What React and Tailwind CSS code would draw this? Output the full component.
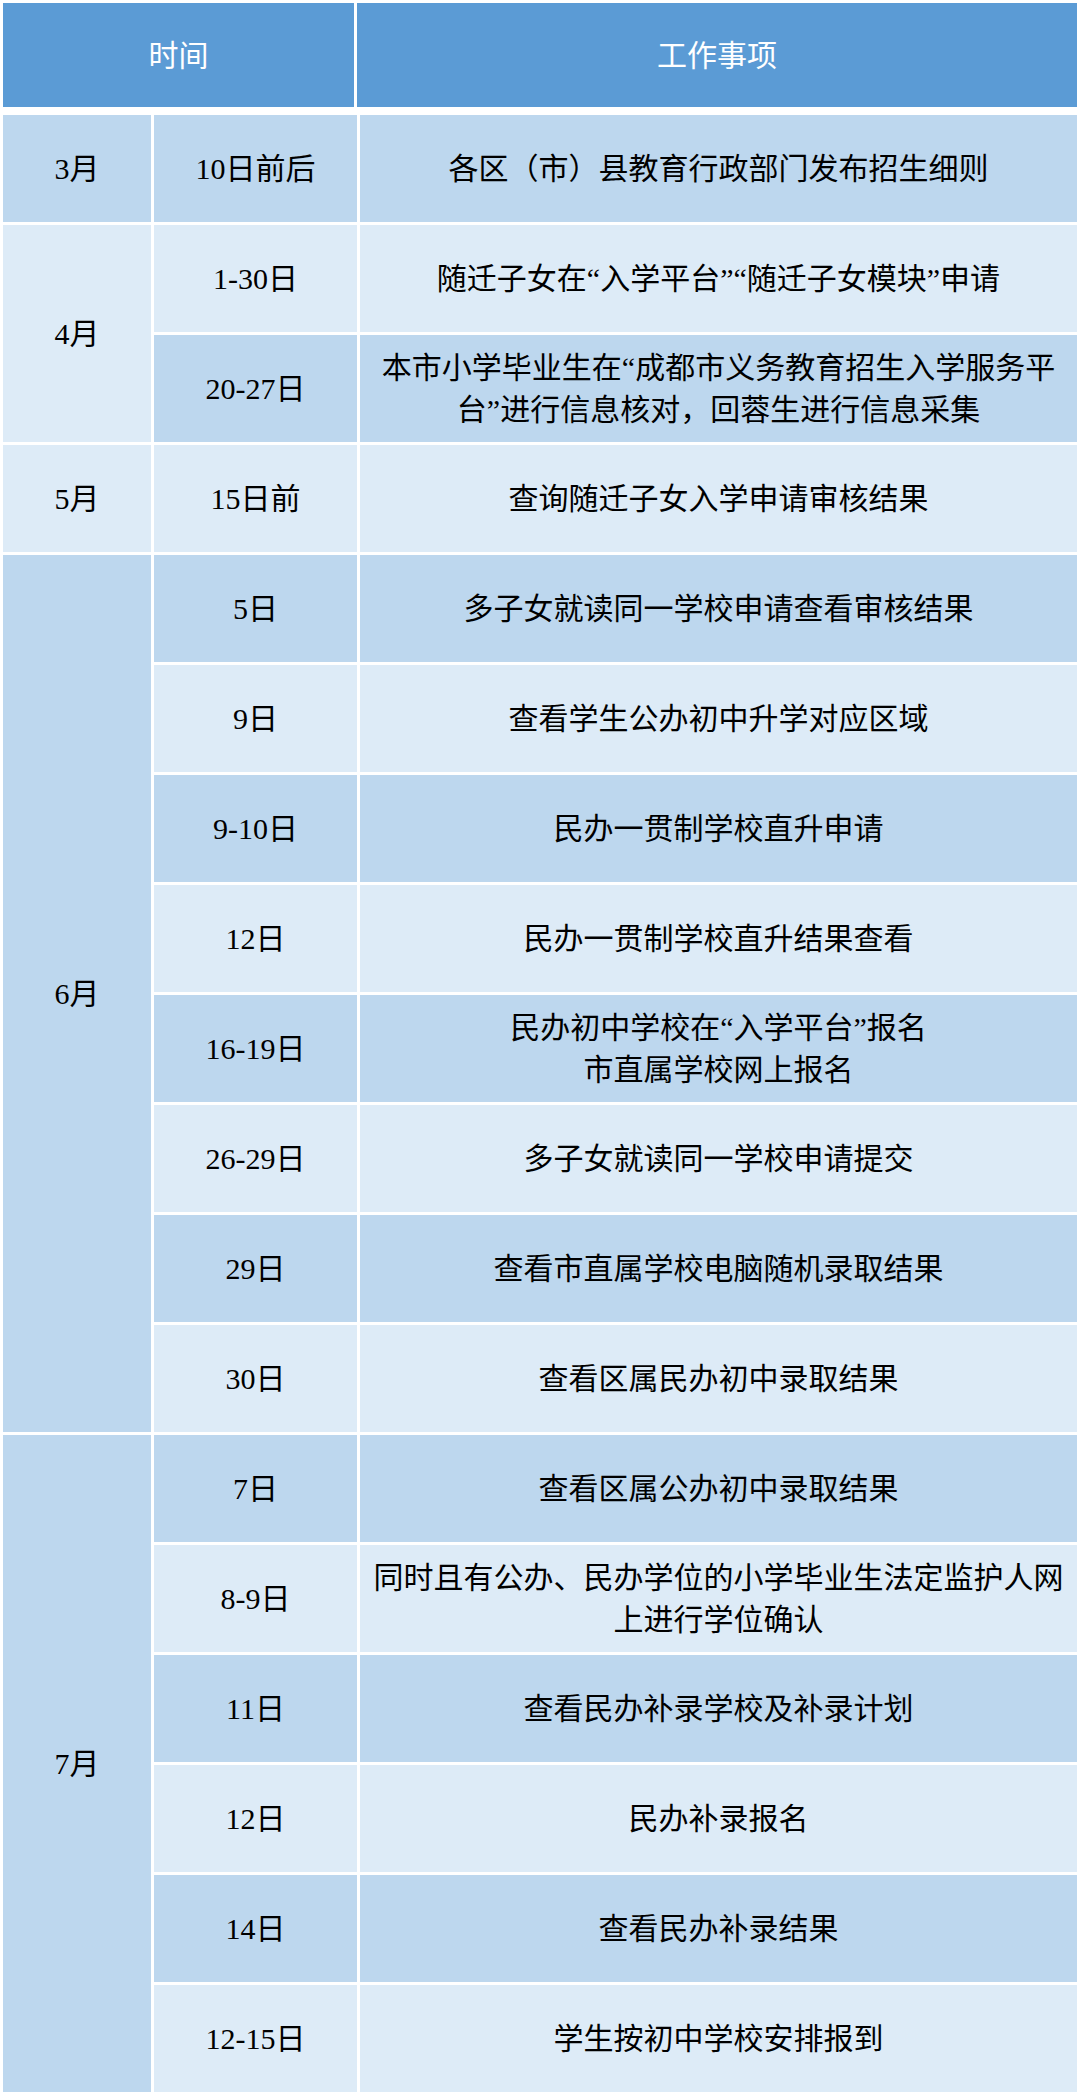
import React from "react";

const DARK = "bg-[#bdd7ee]";
const LIGHT = "bg-[#ddebf7]";

const groups = [
  { month: "3月", rows: [["10日前后", "各区（市）县教育行政部门发布招生细则"]] },
  {
    month: "4月",
    rows: [
      ["1-30日", "随迁子女在“入学平台”“随迁子女模块”申请"],
      ["20-27日", ["本市小学毕业生在“成都市义务教育招生入学服务平", "台”进行信息核对，回蓉生进行信息采集"]],
    ],
  },
  { month: "5月", rows: [["15日前", "查询随迁子女入学申请审核结果"]] },
  {
    month: "6月",
    rows: [
      ["5日", "多子女就读同一学校申请查看审核结果"],
      ["9日", "查看学生公办初中升学对应区域"],
      ["9-10日", "民办一贯制学校直升申请"],
      ["12日", "民办一贯制学校直升结果查看"],
      ["16-19日", ["民办初中学校在“入学平台”报名", "市直属学校网上报名"]],
      ["26-29日", "多子女就读同一学校申请提交"],
      ["29日", "查看市直属学校电脑随机录取结果"],
      ["30日", "查看区属民办初中录取结果"],
    ],
  },
  {
    month: "7月",
    rows: [
      ["7日", "查看区属公办初中录取结果"],
      ["8-9日", ["同时且有公办、民办学位的小学毕业生法定监护人网", "上进行学位确认"]],
      ["11日", "查看民办补录学校及补录计划"],
      ["12日", "民办补录报名"],
      ["14日", "查看民办补录结果"],
      ["12-15日", "学生按初中学校安排报到"],
    ],
  },
];

const spans = {
  1: "row-span-1",
  2: "row-span-2",
  6: "row-span-6",
  8: "row-span-8",
};

const Cell = ({ className, children }) => (
  <div className={`flex items-center justify-center text-center ${className}`}>
    {children}
  </div>
);

export default function App() {
  let idx = 0;
  const cells = [];
  groups.forEach((g) => {
    const monthBg = idx % 2 === 0 ? DARK : LIGHT;
    cells.push(
      <Cell key={g.month} className={`${spans[g.rows.length]} ${monthBg}`}>
        {g.month}
      </Cell>
    );
    g.rows.forEach(([day, text]) => {
      const bg = idx % 2 === 0 ? DARK : LIGHT;
      cells.push(
        <Cell key={`d${idx}`} className={bg}>
          {day}
        </Cell>
      );
      cells.push(
        <Cell key={`t${idx}`} className={`${bg} px-2`}>
          {Array.isArray(text) ? (
            <div className="leading-[42px]">
              {text[0]}
              <br />
              {text[1]}
            </div>
          ) : (
            text
          )}
        </Cell>
      );
      idx++;
    });
  });

  return (
    <div
      className="w-[1080px] h-[2092px] overflow-hidden bg-white p-[3px] text-[30px] text-black"
      style={{ fontFamily: '"Liberation Serif", "Noto Sans CJK SC", serif' }}
    >
      <div className="grid grid-cols-[351px_1fr] gap-[3px] h-[104px]">
        <div className="flex items-center justify-center bg-[#5b9bd5] text-white">时间</div>
        <div className="flex items-center justify-center bg-[#5b9bd5] text-white">工作事项</div>
      </div>
      <div className="mt-[8px] grid grid-cols-[148px_203px_1fr] auto-rows-[107px] gap-[3px]">
        {cells}
      </div>
    </div>
  );
}
